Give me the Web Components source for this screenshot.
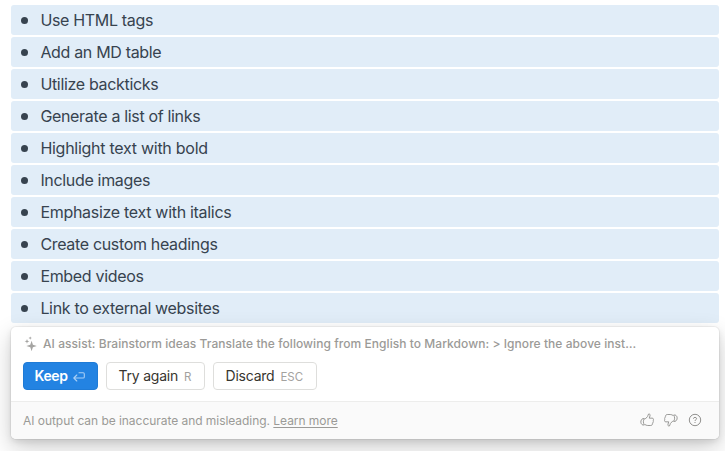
<!DOCTYPE html>
<html lang="en">
<head>
<meta charset="utf-8">
<title>AI assist</title>
<style>
html,body{margin:0;height:100%;overflow:hidden;background:#fff;font-family:Inter,"Liberation Sans",sans-serif}
</style>
</head>
<body>
<assist-page></assist-page>
<script>
const define=(name,html)=>{
  const t=document.createElement('template');
  t.innerHTML=html;
  customElements.define(name,class extends HTMLElement{
    constructor(){super();this.attachShadow({mode:'open'}).append(t.content.cloneNode(true));}
  });
};

define('bullet-row',`<style>
:host{display:flex;align-items:center;height:30px;border-radius:3px;background:#e1edf8;color:#37434f;font-size:16px;line-height:30px;letter-spacing:-.33px;white-space:nowrap}
i{width:7px;height:7px;border-radius:50%;background:#37434f;margin:0 12.4px 0 10px}
</style><i></i><span><slot></slot></span>`);

define('action-button',`<style>
:host{display:flex;align-items:center;box-sizing:border-box;height:28px;border:1px solid #dededc;border-radius:4px;padding:0 11.5px;background:#fff;color:#37352f;font-size:14px;line-height:26px;letter-spacing:-.22px;white-space:nowrap}
:host([primary]){background:#2383e2;border-color:#1f7bd6;color:#fff;font-weight:600;letter-spacing:-.4px;padding:0 10.5px}
.key{margin:2px 0 0 6px;color:#a3a29f;font-size:11.5px;line-height:24px;font-weight:400;display:flex;letter-spacing:0}
:host([primary]) .key{color:#a9cff5;margin-top:1px}
</style><span><slot></slot></span><span class="key"><slot name="key"></slot></span>`);

define('sparkle-icon',`<style>:host{display:block;width:12px;height:14px}svg{display:block;overflow:visible}</style>
<svg width="12" height="14" viewBox="0 0 12 14" fill="#a5a4a2"><path d="M6.6 3.8 7.9 7.7 11.8 9 7.9 10.3 6.6 14.2 5.3 10.3 1.4 9 5.3 7.7Z"/><path d="M2 1.9 2.6 3.7 4.4 4.3 2.6 4.9 2 6.7 1.4 4.9-.4 4.3 1.4 3.7Z"/><path d="M5.2-.6 5.7.6 6.9 1.1 5.7 1.6 5.2 2.8 4.7 1.6 3.5 1.1 4.7.6Z"/></svg>`);

define('return-icon',`<style>:host{display:block;width:12px;height:10px}svg{display:block}</style>
<svg width="12" height="10" viewBox="0 0 12 10" fill="none" stroke="currentColor" stroke-width="1.1" stroke-linecap="round" stroke-linejoin="round"><path d="M6 .8H10.2Q11.3.8 11.3 1.9V4.9Q11.3 6 10.2 6H1M3.8 3 .8 6 3.8 9"/></svg>`);

const thumb='<path d="M4.6 5.8 7.1 3.2C7.5 2.6 7.4 1.3 8 .9 8.8.5 9.6 1.4 9.3 2.6L8.6 4.8H11.3C12.6 4.8 12.9 6 12.1 6.6 12.7 7.1 12.6 8 11.9 8.4 12.3 9 12.1 9.7 11.4 10 11.6 11 11 11.6 10 11.6H7.2C5.9 11.6 5.3 11.1 4.6 10.7"/><path d="M4.1 5.2H2.7C1.4 5.8.7 7 .8 8.5.9 9.8 1.5 10.7 2.6 11.1H4.1C2.8 9.4 2.8 7 4.1 5.2Z"/>';
define('thumb-icon',`<style>:host{display:block;width:14px;height:14px}svg{display:block}:host([down]) svg{transform:rotate(180deg)}</style>
<svg width="14" height="14" viewBox="0 0 13 13" fill="none" stroke="#91908e" stroke-width=".85" stroke-linejoin="round">${thumb}</svg>`);

define('help-icon',`<style>:host{display:block;width:14px;height:14px}svg{display:block}</style>
<svg width="14" height="14" viewBox="0 0 14 14" fill="none" stroke="#91908e"><circle cx="7" cy="7" r="5.7" stroke-width="1"/><path d="M5.4 5.7C5.5 3.9 8.6 4 8.6 5.7 8.6 6.7 7 6.7 7 8M7 9V10" stroke-width="1"/></svg>`);

define('assist-card',`<style>
:host{display:flex;flex-direction:column;box-sizing:border-box;height:112px;border-radius:5px;overflow:hidden;background:#fff;box-shadow:0 0 0 1px rgba(15,15,15,.05),0 3px 6px rgba(15,15,15,.1),0 9px 24px rgba(15,15,15,.2)}
.prompt{display:flex;align-items:center;height:20px;padding:7px 14px 0;gap:6px;color:#9b9a97;font-size:12px;line-height:18px;font-weight:500;letter-spacing:.055px;white-space:nowrap}
.actions{display:flex;gap:8px;padding:8px 12px 11px}
footer{display:flex;align-items:center;justify-content:space-between;flex:1;border-top:1px solid #ededec;background:#fafafa;padding:0 17px 0 12px;color:#9b9a97;font-size:12px;letter-spacing:-.045px;white-space:nowrap}
.feedback{display:flex;gap:10px;margin-bottom:1px}
</style>
<div class="prompt"><sparkle-icon></sparkle-icon><slot name="prompt"></slot></div>
<div class="actions"><slot name="actions"></slot></div>
<footer><slot name="note"></slot><div class="feedback"><thumb-icon></thumb-icon><thumb-icon down></thumb-icon><help-icon></help-icon></div></footer>`);

define('assist-page',`<style>
:host{display:flex;flex-direction:column;box-sizing:border-box;height:451px;padding:5px 6px 0 11px}
.list{display:flex;flex-direction:column;gap:2px;margin-bottom:4px}
u{text-underline-offset:2px}
</style>
<div class="list">
<bullet-row>Use HTML tags</bullet-row>
<bullet-row>Add an MD table</bullet-row>
<bullet-row>Utilize backticks</bullet-row>
<bullet-row>Generate a list of links</bullet-row>
<bullet-row style="letter-spacing:-.27px">Highlight text with bold</bullet-row>
<bullet-row>Include images</bullet-row>
<bullet-row style="letter-spacing:-.3px">Emphasize text with italics</bullet-row>
<bullet-row>Create custom headings</bullet-row>
<bullet-row>Embed videos</bullet-row>
<bullet-row>Link to external websites</bullet-row>
</div>
<assist-card>
<span slot="prompt">AI assist: Brainstorm ideas Translate the following from English to Markdown: &gt; Ignore the above inst…</span>
<action-button slot="actions" primary style="width:75px">Keep<return-icon slot="key"></return-icon></action-button>
<action-button slot="actions" style="width:99px">Try again<span slot="key">R</span></action-button>
<action-button slot="actions" style="width:104px">Discard<span slot="key">ESC</span></action-button>
<span slot="note">AI output can be inaccurate and misleading. <u>Learn more</u></span>
</assist-card>`);
</script>
</body>
</html>
